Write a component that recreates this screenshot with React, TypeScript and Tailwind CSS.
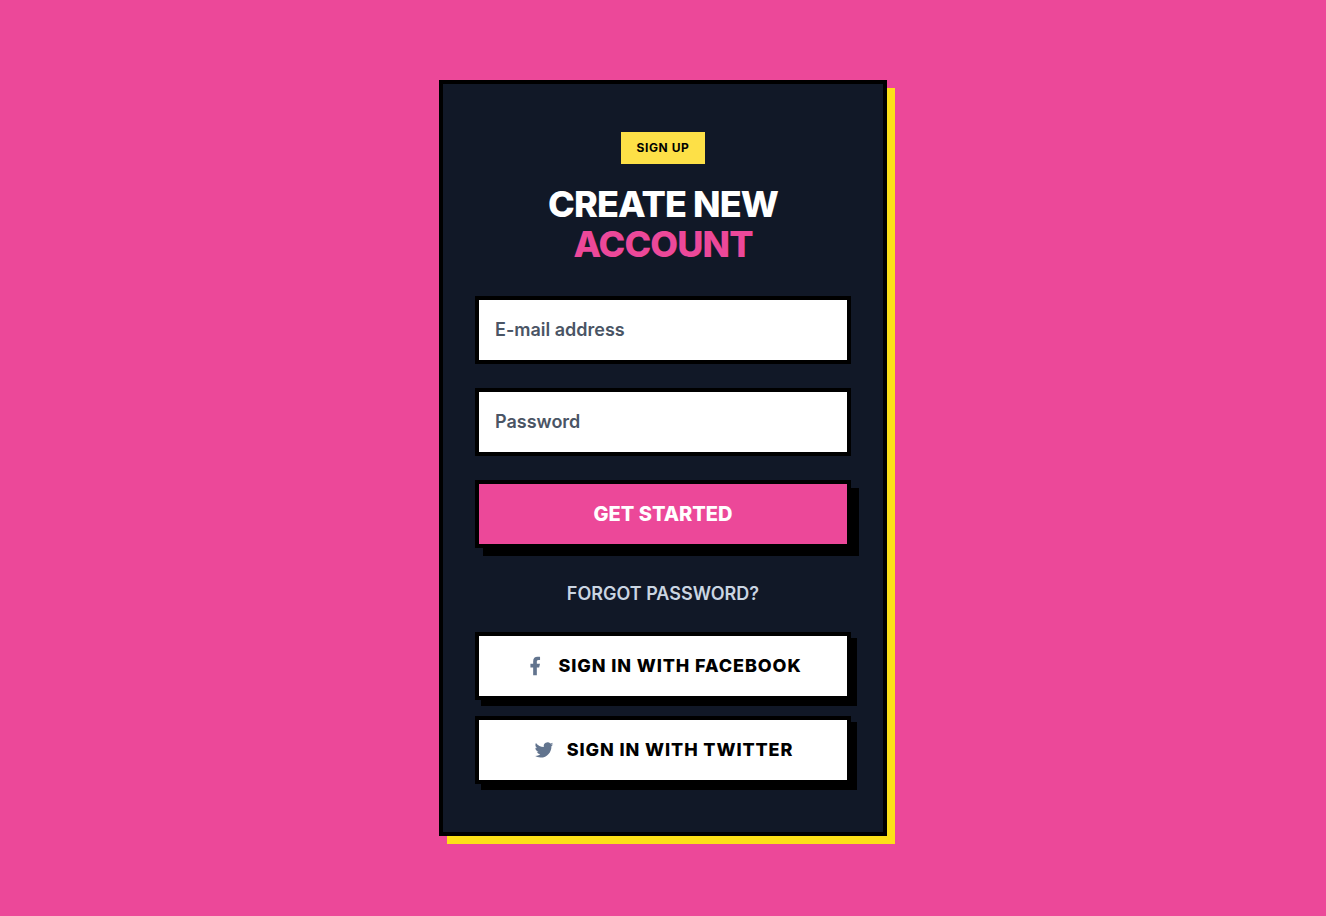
import { FormEvent, ReactNode } from 'react';

function FacebookIcon() {
  return (
    <svg className="h-[22px] w-[22px] text-slate-500" viewBox="0 0 24 24" fill="currentColor" aria-hidden="true">
      <path d="M14 13.5h2.5l1-4H14v-2c0-1.03 0-2 2-2h1.5V2.14c-.326-.043-1.557-.14-2.857-.14C11.928 2 10 3.657 10 6.7v2.8H7v4h3V22h4v-8.5z" />
    </svg>
  );
}

function TwitterIcon() {
  return (
    <svg className="h-[22px] w-[22px] text-slate-500" viewBox="0 0 24 24" fill="currentColor" aria-hidden="true">
      <path d="M22.162 5.656a8.384 8.384 0 0 1-2.402.658A4.196 4.196 0 0 0 21.6 4c-.82.488-1.719.83-2.656 1.015a4.182 4.182 0 0 0-7.126 3.814 11.874 11.874 0 0 1-8.62-4.37 4.168 4.168 0 0 0-.566 2.103c0 1.45.738 2.731 1.86 3.481a4.168 4.168 0 0 1-1.894-.523v.052a4.185 4.185 0 0 0 3.355 4.101 4.21 4.21 0 0 1-1.89.072A4.185 4.185 0 0 0 7.97 16.65a8.394 8.394 0 0 1-6.191 1.732 11.83 11.83 0 0 0 6.41 1.88c7.693 0 11.9-6.373 11.9-11.9 0-.18-.005-.362-.013-.54a8.496 8.496 0 0 0 2.087-2.165z" />
    </svg>
  );
}

function SocialButton({ icon, children }: { icon: ReactNode; children: ReactNode }) {
  return (
    <button
      type="button"
      className="flex w-full items-center justify-center gap-3 border-4 border-black bg-white p-4 text-lg font-extrabold uppercase tracking-wider text-black shadow-[6px_6px_0_#000]"
    >
      {icon}
      <span>{children}</span>
    </button>
  );
}

export default function App() {
  const handleSubmit = (e: FormEvent) => {
    e.preventDefault();
  };

  return (
    <main className="flex min-h-screen items-center justify-center bg-[#ec4899] px-4 py-20 font-['Inter',sans-serif]">
      <div className="w-full max-w-md border-4 border-black bg-[#111827] px-8 py-12 shadow-[8px_8px_0_#fde018]">
        <div className="mb-8 text-center">
          <span className="mb-5 inline-block bg-[#fde047] px-4 py-2 text-xs font-bold uppercase tracking-wider text-black">
            Sign up
          </span>
          <h1 className="text-4xl font-extrabold uppercase tracking-tight text-white">
            Create new
            <span className="block text-[#ec4899]">Account</span>
          </h1>
        </div>

        <form className="space-y-6" onSubmit={handleSubmit}>
          <input
            type="email"
            aria-label="E-mail address"
            placeholder="E-mail address"
            className="block w-full border-4 border-black bg-white p-4 text-lg font-semibold text-black placeholder:text-gray-600"
          />
          <input
            type="password"
            aria-label="Password"
            placeholder="Password"
            className="block w-full border-4 border-black bg-white p-4 text-lg font-semibold text-black placeholder:text-gray-600"
          />
          <button
            type="submit"
            className="block w-full border-4 border-black bg-[#ec4899] p-4 text-xl font-extrabold uppercase text-white shadow-[8px_8px_0_#000]"
          >
            Get started
          </button>
        </form>

        <div className="mb-6 mt-8 text-center">
          <a href="#" className="text-lg font-semibold uppercase text-slate-300">
            Forgot password?
          </a>
        </div>

        <div className="space-y-4">
          <SocialButton icon={<FacebookIcon />}>Sign in with Facebook</SocialButton>
          <SocialButton icon={<TwitterIcon />}>Sign in with Twitter</SocialButton>
        </div>
      </div>
    </main>
  );
}
